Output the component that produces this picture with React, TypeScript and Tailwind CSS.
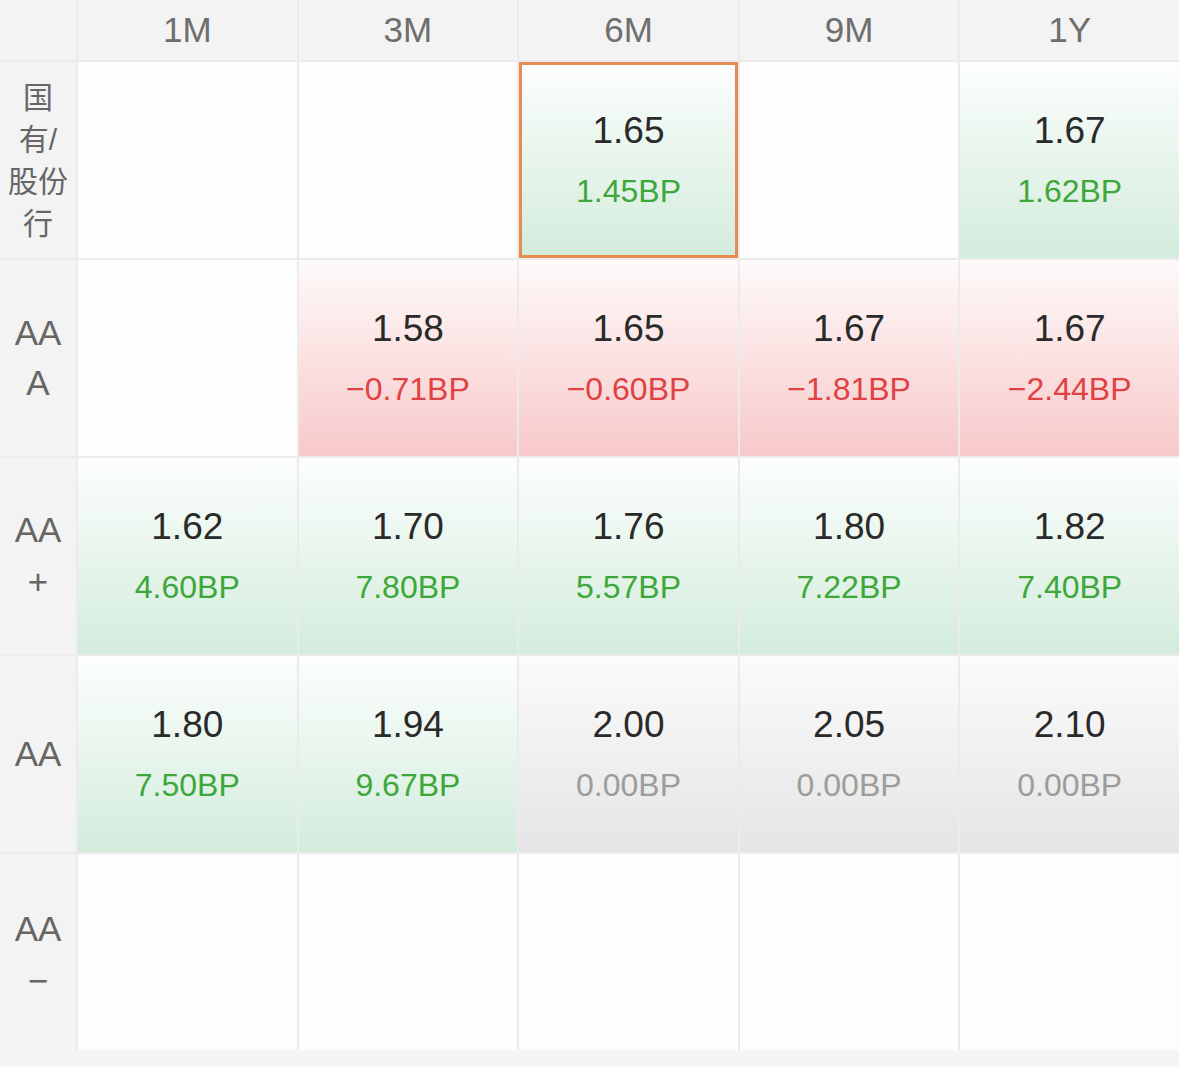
import React from "react";

type Tone = "green" | "red" | "gray";
type Cell = { v: string; bp: string; tone: Tone; selected?: boolean } | null;

const cols = ["1M", "3M", "6M", "9M", "1Y"];

const rows: { label: React.ReactNode; cells: Cell[] }[] = [
  {
    label: (
      <div className="flex flex-col items-center text-[30px] leading-[42px] pt-[2px]">
        <span>国</span>
        <span>有/</span>
        <span>股份</span>
        <span>行</span>
      </div>
    ),
    cells: [
      null,
      null,
      { v: "1.65", bp: "1.45BP", tone: "green", selected: true },
      null,
      { v: "1.67", bp: "1.62BP", tone: "green" },
    ],
  },
  {
    label: (
      <div className="flex flex-col items-center text-[35px] leading-[50px]">
        <span>AA</span>
        <span>A</span>
      </div>
    ),
    cells: [
      null,
      { v: "1.58", bp: "−0.71BP", tone: "red" },
      { v: "1.65", bp: "−0.60BP", tone: "red" },
      { v: "1.67", bp: "−1.81BP", tone: "red" },
      { v: "1.67", bp: "−2.44BP", tone: "red" },
    ],
  },
  {
    label: (
      <div className="flex flex-col items-center text-[35px] leading-[52px]">
        <span>AA</span>
        <span>+</span>
      </div>
    ),
    cells: [
      { v: "1.62", bp: "4.60BP", tone: "green" },
      { v: "1.70", bp: "7.80BP", tone: "green" },
      { v: "1.76", bp: "5.57BP", tone: "green" },
      { v: "1.80", bp: "7.22BP", tone: "green" },
      { v: "1.82", bp: "7.40BP", tone: "green" },
    ],
  },
  {
    label: (
      <div className="flex flex-col items-center text-[35px] leading-[50px]">
        <span>AA</span>
      </div>
    ),
    cells: [
      { v: "1.80", bp: "7.50BP", tone: "green" },
      { v: "1.94", bp: "9.67BP", tone: "green" },
      { v: "2.00", bp: "0.00BP", tone: "gray" },
      { v: "2.05", bp: "0.00BP", tone: "gray" },
      { v: "2.10", bp: "0.00BP", tone: "gray" },
    ],
  },
  {
    label: (
      <div className="flex flex-col items-center text-[35px] leading-[52px] pt-[6px]">
        <span>AA</span>
        <span>−</span>
      </div>
    ),
    cells: [null, null, null, null, null],
  },
];

function DataCell({ cell }: { cell: Cell }) {
  if (!cell) return <div className="bg-[#fdfdfd]" />;
  const bg =
    cell.tone === "green"
      ? "bg-linear-to-b from-[#fcfefd] to-[#d3ecdc]"
      : cell.tone === "red"
      ? "bg-linear-to-b from-[#fefafa] to-[#f7c9ca]"
      : "bg-linear-to-b from-[#fbfbfb] to-[#e5e5e5]";
  const bpColor =
    cell.tone === "green"
      ? "text-[#3ea73a]"
      : cell.tone === "red"
      ? "text-[#e04244]"
      : "text-[#9c9c9c]";
  return (
    <div
      className={`flex flex-col items-center justify-center gap-[22px] ${bg} ${
        cell.selected ? "border-[3px] border-[#e98a52]" : ""
      }`}
    >
      <span className="text-[37px] leading-[40px] text-[#2a2a2a]">{cell.v}</span>
      <span className={`text-[32px] leading-[36px] ${bpColor}`}>{cell.bp}</span>
    </div>
  );
}

export default function App() {
  return (
    <div
      className="w-[1179px] h-[1067px] bg-[#f4f5f7] overflow-hidden"
      style={{ fontFamily: '"Liberation Sans", "Noto Sans CJK SC", sans-serif' }}
    >
      <div className="grid grid-cols-[76px_repeat(5,minmax(0,1fr))] grid-rows-[60px_repeat(5,196px)] gap-[2px] bg-[#ebebeb]">
        <div className="bg-[#f3f3f3]" />
        {cols.map((c) => (
          <div
            key={c}
            className="flex items-center justify-center bg-[#f3f3f3] text-[35px] text-[#6e6e6e]"
          >
            {c}
          </div>
        ))}
        {rows.map((r, i) => (
          <React.Fragment key={i}>
            <div className="flex items-center justify-center bg-[#f3f3f3] text-[#666666]">
              {r.label}
            </div>
            {r.cells.map((cell, j) => (
              <DataCell key={j} cell={cell} />
            ))}
          </React.Fragment>
        ))}
      </div>
    </div>
  );
}
